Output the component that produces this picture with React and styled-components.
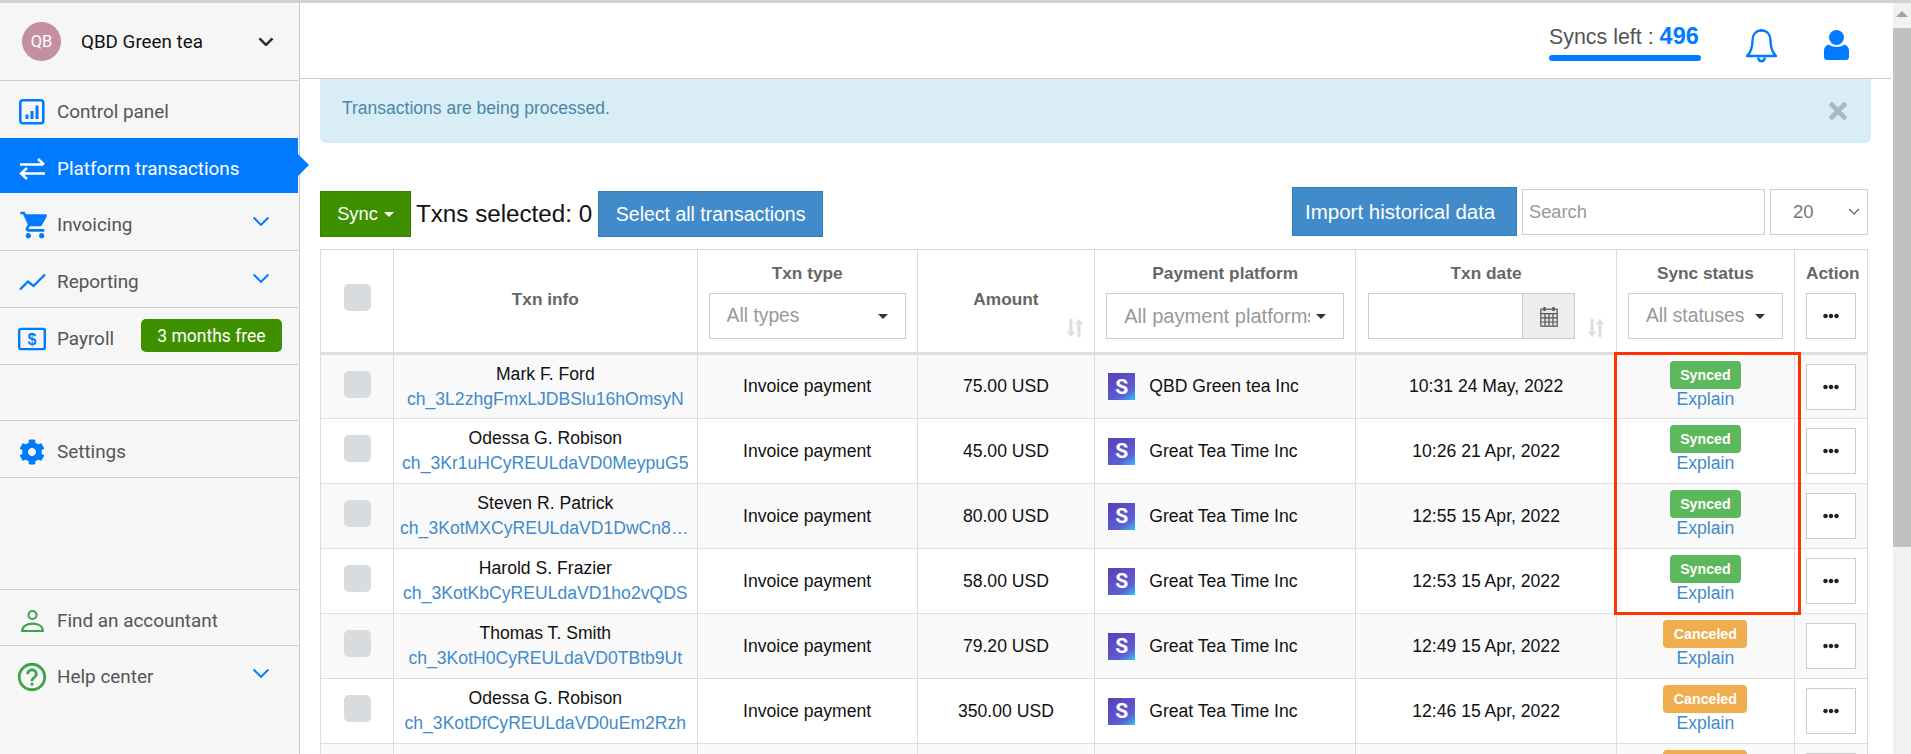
import React from "react";
import styled, { createGlobalStyle } from "styled-components";
import { MdShoppingCart, MdHelpOutline } from "react-icons/md";
import { FaCog, FaTimes, FaEllipsisH } from "react-icons/fa";

const GlobalStyle = createGlobalStyle`
  html, body {
    margin: 0;
    height: 100%;
    overflow: hidden;
    background: #fff;
    font-family: "Liberation Sans", Arial, sans-serif;
  }
  * { box-sizing: border-box; }
`;

//Icons
const ChevronIcon = ({ size = 18, width = 2, color = "#007bff" }) => (
  <svg width={size} height={size * 0.6} viewBox="0 0 18 11" fill="none">
    <path d="M1.5 1.5 9 9l7.5-7.5" stroke={color} strokeWidth={width} />
  </svg>
);

const PanelIcon = () => (
  <svg width="26" height="26" viewBox="0 0 26 26" fill="none">
    <rect x="1.3" y="1.3" width="23" height="23" rx="2.5" stroke="#007bff" strokeWidth="2.6" />
    <path d="M6.500 15.500h3V20h-3zM11.500 12h3v8h-3zM16.500 6.500h3V20h-3z" fill="#007bff" />
  </svg>
);

const TransferIcon = () => (
  <svg width="27" height="23" viewBox="0 0 27 23" fill="none" stroke="#fff" strokeWidth="2.4">
    <path d="M1 7h23M19 1.5 25 7" />
    <path d="M26 16H3M8 10.5 2 16l6 5.5" />
  </svg>
);

const TrendIcon = () => (
  <svg width="27" height="18" viewBox="0 0 27 18" fill="none" stroke="#007bff" strokeWidth="2.4">
    <path d="M1 16.5 9 8.5l5.5 4.5L26 1.5" />
  </svg>
);

const PayrollIcon = () => (
  <svg width="28" height="23" viewBox="0 0 28 23" fill="none">
    <rect x="1.2" y="1.2" width="25.6" height="20.6" rx="2" stroke="#007bff" strokeWidth="2.4" />
    <text x="14" y="17.5" textAnchor="middle" fontSize="16" fontWeight="700" fontFamily="Liberation Sans" fill="#007bff">$</text>
  </svg>
);

const AccountantIcon = () => (
  <svg width="23" height="23" viewBox="0 0 23 23" fill="none" stroke="#3fa34d" strokeWidth="2.2">
    <circle cx="11.5" cy="5.5" r="4" />
    <path d="M1.2 21.5c0-4.6 4.4-7.3 10.3-7.3s10.3 2.7 10.3 7.3z" />
  </svg>
);

const BellIcon = () => (
  <svg width="33" height="35" viewBox="0 0 32 35" fill="none" stroke="#007bff" strokeWidth="2.4">
    <path d="M16 2.5c-6 0-9 4.6-9 10 0 7-1.5 11.500-5.500 15.500h29c-4-4-5.500-8.500-5.500-15.500 0-5.400-3-10-9-10z" strokeLinejoin="round" />
    <path d="M16 1v2" />
    <path d="M12.500 29.500c.5 2.500 1.800 3.800 3.500 3.800s3-1.300 3.500-3.800" />
  </svg>
);

const UserIcon = () => (
  <svg width="25" height="30" viewBox="0 0 25 30" fill="#007bff">
    <circle cx="12.5" cy="7.500" r="7.500" />
    <path d="M4.500 14.500C6.500 16 9 16.800 12.500 16.800s6-.8 8-2.300c2.500.8 4.500 3.300 4.500 6V27c0 1.700-1.300 3-3 3H3c-1.700 0-3-1.300-3-3v-6.500c0-2.700 2-5.200 4.500-6z" />
  </svg>
);

const CalendarIcon = () => (
  <svg width="18" height="21" viewBox="0 0 18 21" fill="none" stroke="#555" strokeWidth="1.2">
    <rect x="0.8" y="3.200" width="16.400" height="17" fill="#e6e6e6" />
    <path d="M.8 7.600h16.400M.8 11.800h16.400M.8 16h16.400M5 7.600v12.600M9 7.600v12.600M13 7.600v12.600" />
    <path d="M4.500 1v4M13.500 1v4" strokeWidth="2.200" />
  </svg>
);

const SortIcon = () => (
  <svg width="18" height="18" viewBox="0 0 18 18" fill="#dedede">
    <path d="M3.500 0h3v12.500H9.500L5 18 .5 12.500h3zM11.500 18h3V5.500h3L13 0 8.500 5.500h3z" />
  </svg>
);

const StripeLogo = () => (
  <Logo>S</Logo>
);

//Data
const rows = [
  { name: "Mark F. Ford", id: "ch_3L2zhgFmxLJDBSlu16hOmsyN", type: "Invoice payment", amount: "75.00 USD", platform: "QBD Green tea Inc", date: "10:31 24 May, 2022", status: "Synced" },
  { name: "Odessa G. Robison", id: "ch_3Kr1uHCyREULdaVD0MeypuG5", type: "Invoice payment", amount: "45.00 USD", platform: "Great Tea Time Inc", date: "10:26 21 Apr, 2022", status: "Synced" },
  { name: "Steven R. Patrick", id: "ch_3KotMXCyREULdaVD1DwCn8jSbU", type: "Invoice payment", amount: "80.00 USD", platform: "Great Tea Time Inc", date: "12:55 15 Apr, 2022", status: "Synced" },
  { name: "Harold S. Frazier", id: "ch_3KotKbCyREULdaVD1ho2vQDS", type: "Invoice payment", amount: "58.00 USD", platform: "Great Tea Time Inc", date: "12:53 15 Apr, 2022", status: "Synced" },
  { name: "Thomas T. Smith", id: "ch_3KotH0CyREULdaVD0TBtb9Ut", type: "Invoice payment", amount: "79.20 USD", platform: "Great Tea Time Inc", date: "12:49 15 Apr, 2022", status: "Canceled" },
  { name: "Odessa G. Robison", id: "ch_3KotDfCyREULdaVD0uEm2Rzh", type: "Invoice payment", amount: "350.00 USD", platform: "Great Tea Time Inc", date: "12:46 15 Apr, 2022", status: "Canceled" },
  { name: "", id: "", type: "", amount: "", platform: "", date: "", status: "Canceled", partial: true },
];

const columns = [73, 303.5, 220, 177.5, 261, 260.5, 178, 73];

function App() {
  return (
    <>
      <GlobalStyle />
      <Page>
        <Sidebar>
          <Account>
            <Avatar>QB</Avatar>
            <AccountName>QBD Green tea</AccountName>
            <ChevronIcon size={16} width={3} color="#2b2f36" />
          </Account>
          <NavItem $noBorder>
            <NavIcon><PanelIcon /></NavIcon>
            Control panel
          </NavItem>
          <NavItem $short $active $noBorder>
            <NavIcon><TransferIcon /></NavIcon>
            Platform transactions
          </NavItem>
          <NavItem>
            <NavIcon><CartSlot><MdShoppingCart size={32} color="#007bff" /></CartSlot></NavIcon>
            Invoicing
            <NavChevron><ChevronIcon /></NavChevron>
          </NavItem>
          <NavItem>
            <NavIcon><TrendIcon /></NavIcon>
            Reporting
            <NavChevron><ChevronIcon /></NavChevron>
          </NavItem>
          <NavItem>
            <NavIcon><PayrollIcon /></NavIcon>
            Payroll
            <FreeBadge>3 months free</FreeBadge>
          </NavItem>
          <NavGap $height={56} />
          <NavItem>
            <NavIcon><FaCog size={26} color="#007bff" /></NavIcon>
            Settings
          </NavItem>
          <NavGap $height={112} />
          <NavItem $short>
            <NavIcon><AccountantIcon /></NavIcon>
            Find an accountant
          </NavItem>
          <NavItem $noBorder>
            <NavIcon><MdHelpOutline size={34} color="#3fa34d" /></NavIcon>
            Help center
            <NavChevron><ChevronIcon /></NavChevron>
          </NavItem>
        </Sidebar>

        <Main>
          <Header>
            <SyncsBox>
              <SyncsText>Syncs left : <strong>496</strong></SyncsText>
              <SyncsBar />
            </SyncsBox>
            <BellSlot><BellIcon /></BellSlot>
            <UserSlot><UserIcon /></UserSlot>
          </Header>

          <Alert>
            <AlertText>Transactions are being processed.</AlertText>
            <FaTimes size={26} color="#a9bac3" />
          </Alert>

          <Toolbar>
            <ToolGroup>
              <SyncButton>Sync<Caret $color="#fff" /></SyncButton>
              <Selected>Txns selected: 0</Selected>
              <BlueButton $height={46} $width={225} $size={19.5}>Select all transactions</BlueButton>
            </ToolGroup>
            <ToolGroup $top>
              <ImportButton>Import historical data</ImportButton>
              <SearchInput placeholder="Search" />
              <PageSize>20<ChevronIcon size={12} width={2} color="#666" /></PageSize>
            </ToolGroup>
          </Toolbar>

          <TableWrap>
            <Table>
              <colgroup>
                {columns.map((w, i) => <col key={i} style={{ width: w }} />)}
              </colgroup>
              <thead>
                <tr>
                  <Th><CheckBox /></Th>
                  <Th>Txn info</Th>
                  <Th $filter>
                    <ThLabel>Txn type</ThLabel>
                    <Filter><FilterText>All types</FilterText><Caret /></Filter>
                  </Th>
                  <Th>
                    Amount
                    <SortSlot $right={10}><SortIcon /></SortSlot>
                  </Th>
                  <Th $filter>
                    <ThLabel>Payment platform</ThLabel>
                    <Filter><FilterText $size={20.1}>All payment platforms</FilterText><Caret /></Filter>
                  </Th>
                  <Th $filter>
                    <ThLabel>Txn date</ThLabel>
                    <DateFilter>
                      <DateAddon><CalendarIcon /></DateAddon>
                    </DateFilter>
                    <SortSlot $right={11}><SortIcon /></SortSlot>
                  </Th>
                  <Th $filter>
                    <ThLabel>Sync status</ThLabel>
                    <Filter><FilterText>All statuses</FilterText><Caret /></Filter>
                  </Th>
                  <Th $filter>
                    <ThLabel>Action</ThLabel>
                    <MoreButton><FaEllipsisH size={16} color="#222" /></MoreButton>
                  </Th>
                </tr>
              </thead>
              <tbody>
                {rows.map((row, i) => (
                  <tr key={i}>
                    <Td $odd={i % 2 === 0}>{!row.partial && <CheckBox />}</Td>
                    <InfoTd $odd={i % 2 === 0}>
                      <TxnName>{row.name}</TxnName>
                      <TxnLink>{row.id}</TxnLink>
                    </InfoTd>
                    <Td $odd={i % 2 === 0}>{row.type}</Td>
                    <Td $odd={i % 2 === 0}>{row.amount}</Td>
                    <Td $odd={i % 2 === 0}>
                      {!row.partial && <PlatformCell><StripeLogo />{row.platform}</PlatformCell>}
                    </Td>
                    <Td $odd={i % 2 === 0}>{row.date}</Td>
                    <StatusTd $odd={i % 2 === 0}>
                      <StatusBadge $status={row.status}>{row.status}</StatusBadge>
                      <ExplainLink>Explain</ExplainLink>
                    </StatusTd>
                    <ActionTd $odd={i % 2 === 0}>
                      <MoreButton><FaEllipsisH size={16} color="#222" /></MoreButton>
                    </ActionTd>
                  </tr>
                ))}
              </tbody>
            </Table>
            <Highlight />
          </TableWrap>
        </Main>

        <ScrollBar>
          <ScrollUp />
          <ScrollThumb />
        </ScrollBar>
      </Page>
    </>
  );
}

const Page = styled.div`
  display: flex;
  width: 1911px;
  height: 754px;
  overflow: hidden;
  border-top: 3px solid #d2d2d2;
`;

const Sidebar = styled.aside`
  flex: 0 0 300px;
  height: 100%;
  padding-right: 1px;
  background: #f6f6f6;
  border-right: 1px solid #c8c8c8;
  font-family: Roboto, "Liberation Sans", sans-serif;
`;

const Account = styled.div`
  display: flex;
  align-items: center;
  height: 78px;
  padding: 0 24px 0 22px;
  border-bottom: 1px solid #ccc;
`;

const Avatar = styled.div`
  display: flex;
  align-items: center;
  justify-content: center;
  width: 39px;
  height: 39px;
  border-radius: 50%;
  background: #c48fa3;
  color: #fff;
  font-size: 16.500px;
`;

const AccountName = styled.span`
  flex: 1;
  margin-left: 20px;
  color: #111;
  font-size: 18.800px;
`;

const NavItem = styled.div`
  position: relative;
  display: flex;
  align-items: center;
  height: ${(p) => (p.$short ? 56 : 57)}px;
  padding: 5px 0 0 57px;
  font-size: 18.900px;
  color: ${(p) => (p.$active ? "#fff" : "#555")};
  background: ${(p) => (p.$active ? "#007bff" : "transparent")};
  background-clip: padding-box;
  border-bottom: 1px solid ${(p) => (p.$noBorder ? "transparent" : "#ccc")};

  ${(p) =>
    p.$active &&
    `
    &::after {
      content: "";
      position: absolute;
      right: -11px;
      top: 16px;
      border-left: 11px solid #007bff;
      border-top: 11px solid transparent;
      border-bottom: 11px solid transparent;
    }
  `}
`;

const NavIcon = styled.span`
  position: absolute;
  left: 12px;
  top: calc(50% + 3px);
  transform: translateY(-50%);
  display: flex;
  align-items: center;
  justify-content: center;
  width: 40px;
`;

const CartSlot = styled.span`
  display: flex;
  margin-left: 5px;
`;

const NavChevron = styled.span`
  position: absolute;
  right: 28px;
  top: 22px;
  display: flex;
`;

const FreeBadge = styled.span`
  position: absolute;
  left: 141px;
  top: 11px;
  display: flex;
  align-items: center;
  justify-content: center;
  width: 141px;
  height: 33px;
  border-radius: 5px;
  background: #3f9000;
  color: #fff;
  font-size: 17.500px;
`;

const NavGap = styled.div`
  height: ${(p) => p.$height}px;
  border-bottom: 1px solid #ccc;
`;

const Main = styled.main`
  flex: 1;
  min-width: 0;
  background: #fff;
`;

const Header = styled.header`
  position: relative;
  display: flex;
  justify-content: flex-end;
  align-items: flex-start;
  height: 76px;
  margin-right: 2px;
  border-bottom: 1px solid #c9c9c9;
`;

const SyncsBox = styled.div`
  width: 152px;
  margin: 19px 44px 0 0;
`;

const SyncsText = styled.div`
  height: 28px;
  line-height: 28px;
  font-size: 21.400px;
  color: #555;
  white-space: nowrap;

  strong {
    font-size: 23.500px;
    color: #007bff;
  }
`;

const SyncsBar = styled.div`
  height: 6px;
  margin-top: 5px;
  border-radius: 3px;
  background: #007bff;
`;

const BellSlot = styled.div`
  margin: 25px 46px 0 0;
`;

const UserSlot = styled.div`
  margin: 27px 42px 0 0;
`;

const Alert = styled.div`
  display: flex;
  align-items: center;
  justify-content: space-between;
  height: 64px;
  margin: 0 22px 0 20px;
  padding: 0 20px 0 22px;
  background: #d9edf7;
  border-radius: 0 0 6px 6px;
`;

const AlertText = styled.span`
  margin-bottom: 5px;
  color: #4a87a8;
  font-size: 17.500px;
`;

const Toolbar = styled.div`
  display: flex;
  justify-content: space-between;
  height: 50px;
  margin: 44px 25px 12px 20px;
`;

const ToolGroup = styled.div`
  display: flex;
  align-items: center;
  gap: 5px;
  align-self: ${(p) => (p.$top ? "flex-start" : "flex-end")};
`;

const SyncButton = styled.button`
  display: flex;
  align-items: center;
  justify-content: center;
  gap: 6px;
  width: 91px;
  height: 46px;
  padding: 0;
  background: #3f9000;
  border: 1px solid #387f00;
  color: #fff;
  font: 18.300px "Liberation Sans", Arial, sans-serif;
`;

const Caret = styled.span`
  flex: none;
  width: 0;
  height: 0;
  border-top: 5px solid ${(p) => p.$color || "#333"};
  border-left: 5px solid transparent;
  border-right: 5px solid transparent;
`;

const Selected = styled.span`
  font-size: 24.200px;
  color: #111;
  white-space: nowrap;
`;

const BlueButton = styled.button`
  width: ${(p) => p.$width}px;
  height: ${(p) => p.$height}px;
  padding: 0;
  margin-left: 1px;
  background: #428bca;
  border: 1px solid #357ebd;
  color: #fff;
  font: ${(p) => p.$size}px "Liberation Sans", Arial, sans-serif;
`;

const ImportButton = styled(BlueButton).attrs({ $height: 49, $width: 225, $size: 20.5 })`
  padding-left: 12px;
  text-align: left;
`;

const SearchInput = styled.input`
  width: 243px;
  height: 46px;
  padding: 0 6px;
  border: 1px solid #ccc;
  outline: none;
  font: 18.300px "Liberation Sans", Arial, sans-serif;

  &::placeholder {
    color: #999;
  }
`;

const PageSize = styled.div`
  display: flex;
  align-items: center;
  justify-content: space-between;
  width: 98px;
  height: 46px;
  padding: 0 7px 0 22px;
  border: 1px solid #ccc;
  color: #777;
  font-size: 18.500px;
`;

const TableWrap = styled.div`
  position: relative;
  margin: 0 25px 0 20px;
`;

const Table = styled.table`
  width: 1548px;
  table-layout: fixed;
  border-collapse: collapse;
  font-size: 17.600px;
  color: #111;
`;

const Th = styled.th`
  position: relative;
  height: 104px;
  padding: ${(p) => (p.$filter ? "11px 11px 0" : "0 11px 3px")};
  vertical-align: ${(p) => (p.$filter ? "top" : "middle")};
  border: 1px solid #ddd;
  border-bottom: 3px solid #ddd;
  font-size: 17.280px;
  font-weight: 700;
  color: #666;
`;

const ThLabel = styled.div`
  height: 24px;
  line-height: 24px;
  margin-bottom: 8px;
  white-space: nowrap;
`;

const Filter = styled.div`
  display: flex;
  align-items: center;
  gap: 6px;
  height: 46px;
  padding: 0 17px;
  border: 1px solid #ccc;
  background: #fff;
`;

const FilterText = styled.span`
  flex: 1;
  min-width: 0;
  overflow: hidden;
  white-space: nowrap;
  text-align: left;
  color: #999;
  font-size: ${(p) => p.$size || 19.3}px;
  font-weight: 400;
`;

const DateFilter = styled.div`
  display: flex;
  justify-content: flex-end;
  width: 207px;
  height: 46px;
  margin-left: 1px;
  border: 1px solid #ccc;
`;

const DateAddon = styled.span`
  display: flex;
  align-items: center;
  justify-content: center;
  width: 52px;
  background: #eee;
  border-left: 1px solid #ccc;
`;

const SortSlot = styled.span`
  position: absolute;
  right: ${(p) => p.$right}px;
  bottom: 15px;
  display: flex;
`;

const CheckBox = styled.span`
  display: block;
  width: 27px;
  height: 27px;
  margin: 0 auto 5px;
  border-radius: 5px;
  background: #d8dcdf;
`;

const Td = styled.td`
  height: 65px;
  padding: 0 10px;
  vertical-align: middle;
  text-align: center;
  border: 1px solid #ddd;
  background: ${(p) => (p.$odd ? "#f9f9f9" : "#fff")};
`;

const InfoTd = styled(Td)`
  padding: 0 6px;
`;

const TxnName = styled.div`
  line-height: 25px;
  color: #111;
`;

const TxnLink = styled.div`
  line-height: 25px;
  color: #428bca;
  overflow: hidden;
  white-space: nowrap;
  text-overflow: ellipsis;
`;

const PlatformCell = styled.div`
  display: flex;
  align-items: center;
  gap: 14px;
  padding-left: 3px;
`;

const Logo = styled.span`
  display: flex;
  align-items: center;
  justify-content: center;
  width: 27px;
  height: 27px;
  background: linear-gradient(145deg, #5b3fb4 0%, #5c5ed6 72%, #2fc6f6 100%);
  color: #fff;
  font-family: Roboto, sans-serif;
  font-size: 21px;
  font-weight: 700;
`;

const StatusTd = styled(Td)`
  vertical-align: top;
  padding-top: 6px;
`;

const StatusBadge = styled.span`
  display: block;
  width: ${(p) => (p.$status === "Synced" ? 71 : 84)}px;
  height: 28px;
  margin: 0 auto;
  line-height: 28px;
  border-radius: 4px;
  background: ${(p) => (p.$status === "Synced" ? "#5cb85c" : "#f0ad4e")};
  color: #fff;
  font-size: 14.200px;
  font-weight: 700;
`;

const ExplainLink = styled.div`
  line-height: 21px;
  color: #428bca;
`;

const ActionTd = styled(Td)`
  padding: 0 11px;
`;

const MoreButton = styled.button`
  display: flex;
  align-items: center;
  justify-content: center;
  width: 50px;
  height: 46px;
  padding: 0;
  background: #fff;
  border: 1px solid #ccc;
`;

const Highlight = styled.div`
  position: absolute;
  left: 1294px;
  top: 103px;
  width: 187px;
  height: 263px;
  border: 3px solid #ff3300;
  pointer-events: none;
`;

const ScrollBar = styled.div`
  flex: 0 0 18px;
  height: 100%;
  background: #f1f1f1;
`;

const ScrollUp = styled.div`
  height: 25px;
  padding: 8px 0 0 3px;

  &::before {
    content: "";
    display: block;
    width: 0;
    height: 0;
    border-bottom: 6px solid #a3a3a3;
    border-left: 6px solid transparent;
    border-right: 6px solid transparent;
  }
`;

const ScrollThumb = styled.div`
  height: 519px;
  background: #c1c1c1;
`;

export default App;
